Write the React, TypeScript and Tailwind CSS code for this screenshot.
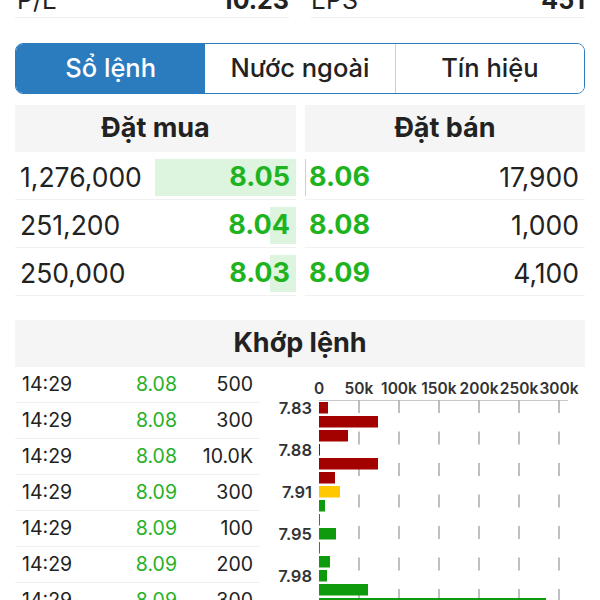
import React from 'react'

const GREEN = '#1fb41f'

const bids = [
    { vol: '1,276,000', price: '8.05', bar: 141 },
    { vol: '251,200', price: '8.04', bar: 26 },
    { vol: '250,000', price: '8.03', bar: 26 },
]

const asks = [
    { price: '8.06', vol: '17,900', bar: 1 },
    { price: '8.08', vol: '1,000', bar: 0 },
    { price: '8.09', vol: '4,100', bar: 0 },
]

const trades = [
    { t: '14:29', p: '8.08', v: '500' },
    { t: '14:29', p: '8.08', v: '300' },
    { t: '14:29', p: '8.08', v: '10.0K' },
    { t: '14:29', p: '8.09', v: '300' },
    { t: '14:29', p: '8.09', v: '100' },
    { t: '14:29', p: '8.09', v: '200' },
    { t: '14:29', p: '8.09', v: '300' },
]

// volume by price, width in px (40px = 50k)
const bars = [
    { w: 9, c: '#a30000', label: '7.83' },
    { w: 59, c: '#a30000' },
    { w: 29, c: '#a30000' },
    { w: 1, c: '#a30000', label: '7.88' },
    { w: 59, c: '#a30000' },
    { w: 16, c: '#a30000' },
    { w: 21, c: '#ffc800', label: '7.91' },
    { w: 6, c: '#0d9a0d' },
    { w: 1, c: '#0d9a0d' },
    { w: 17, c: '#0d9a0d', label: '7.95' },
    { w: 1, c: '#0d9a0d' },
    { w: 11, c: '#0d9a0d' },
    { w: 8, c: '#0d9a0d', label: '7.98' },
    { w: 49, c: '#0d9a0d' },
    { w: 227, c: '#0d9a0d' },
]

const ticks = ['0', '50k', '100k', '150k', '200k', '250k', '300k']

function VolumeChart() {
    const x0 = 49
    return (
        <svg width="315" height="233" className="block">
            {ticks.map((t, i) => (
                <text
                    key={t}
                    x={x0 + i * 40}
                    y={27}
                    textAnchor="middle"
                    fontSize="15.5"
                    fontWeight="600"
                    fill="#333"
                >
                    {t}
                </text>
            ))}
            <line x1={x0} y1={33.5} x2={298} y2={33.5} stroke="#c8c8c8" strokeWidth="1" />
            {ticks.slice(1).map((t, i) => (
                <line
                    key={t}
                    x1={x0 + (i + 1) * 40}
                    y1={33}
                    x2={x0 + (i + 1) * 40}
                    y2={233}
                    stroke="#aaa"
                    strokeWidth="1.5"
                    strokeDasharray="13 18.5"
                />
            ))}
            {bars.map((b, i) => {
                const y = 35 + i * 14
                return (
                    <g key={i}>
                        <rect x={x0} y={y} width={b.w} height={11.5} fill={b.c} />
                        {b.label && (
                            <text
                                x={42}
                                y={y + 11.5}
                                textAnchor="end"
                                fontSize="16.5"
                                fontWeight="600"
                                fill="#333"
                            >
                                {b.label}
                            </text>
                        )}
                    </g>
                )
            })}
        </svg>
    )
}

export default function App() {
    return (
        <div className="w-[600px] h-[600px] overflow-hidden bg-white text-[#222] font-['Inter',sans-serif]">
            {/* stats row (cut off at top) */}
            <div className="-mt-[15px] grid grid-cols-2 gap-[22px] px-[15px]">
                <div className="flex items-end justify-between border-b border-[#eee] pb-[2px] text-[25px] leading-[30px]">
                    <span className="pl-[2px]">P/E</span>
                    <span className="font-bold">10.23</span>
                </div>
                <div className="flex items-end justify-between border-b border-[#eee] pb-[2px] text-[25px] leading-[30px]">
                    <span>EPS</span>
                    <span className="font-bold">451</span>
                </div>
            </div>

            <div className="px-[15px]">
                {/* tabs */}
                <div className="mt-[25px] grid h-[51px] grid-cols-3 overflow-hidden rounded-[8px] border-[1.5px] border-[#2b7cbf] text-[25.5px] font-medium">
                    <div className="flex items-center justify-center bg-[#2b7cbf] text-white">Sổ lệnh</div>
                    <div className="flex items-center justify-center bg-white">Nước ngoài</div>
                    <div className="flex items-center justify-center border-l border-[#cfcfcf] bg-white">Tín hiệu</div>
                </div>

                {/* order book */}
                <div className="mt-[11px] grid grid-cols-[281px_1fr] gap-[9px]">
                    <div>
                        <div className="flex h-[47px] items-center justify-center bg-[#f5f5f5] text-[27px] font-bold">
                            Đặt mua
                        </div>
                        {bids.map((r) => (
                            <div key={r.price} className="flex h-[48px] items-center justify-between border-b border-[#f0f0f0] pl-[5px] pt-[4px]">
                                <span className="text-[26.5px]">{r.vol}</span>
                                <div className="relative flex h-[37px] items-center justify-end pr-[6px]">
                                    <div className="absolute right-0 top-0 h-full bg-[#ddf4df]" style={{ width: r.bar }} />
                                    <span className="relative text-[27px] font-bold" style={{ color: GREEN }}>
                                        {r.price}
                                    </span>
                                </div>
                            </div>
                        ))}
                    </div>
                    <div>
                        <div className="flex h-[47px] items-center justify-center bg-[#f5f5f5] text-[27px] font-bold">
                            Đặt bán
                        </div>
                        {asks.map((r) => (
                            <div key={r.price} className="flex h-[48px] items-center justify-between border-b border-[#f0f0f0] pr-[6px] pt-[4px]">
                                <div className="relative flex h-[37px] items-center pl-[4px]">
                                    <div className="absolute left-0 top-0 h-full bg-[#cfcfcf]" style={{ width: r.bar }} />
                                    <span className="relative text-[27px] font-bold" style={{ color: GREEN }}>
                                        {r.price}
                                    </span>
                                </div>
                                <span className="text-[26.5px]">{r.vol}</span>
                            </div>
                        ))}
                    </div>
                </div>

                {/* matched orders */}
                <div className="mt-[24px] flex h-[47px] items-center justify-center bg-[#f5f5f5] text-[27px] font-bold">
                    Khớp lệnh
                </div>
                <div className="flex gap-[10px]">
                    <div className="w-[245px] shrink-0">
                        {trades.map((r, i) => (
                            <div key={i} className="grid h-[36px] grid-cols-[1fr_70px_76px] items-center border-b border-[#f0f0f0] pl-[7px] pr-[7px] pt-[1px] text-[19.5px]">
                                <span>{r.t}</span>
                                <span className="text-right text-[#27b027]">{r.p}</span>
                                <span className="text-right">{r.v}</span>
                            </div>
                        ))}
                    </div>
                    <VolumeChart />
                </div>
            </div>
        </div>
    )
}
